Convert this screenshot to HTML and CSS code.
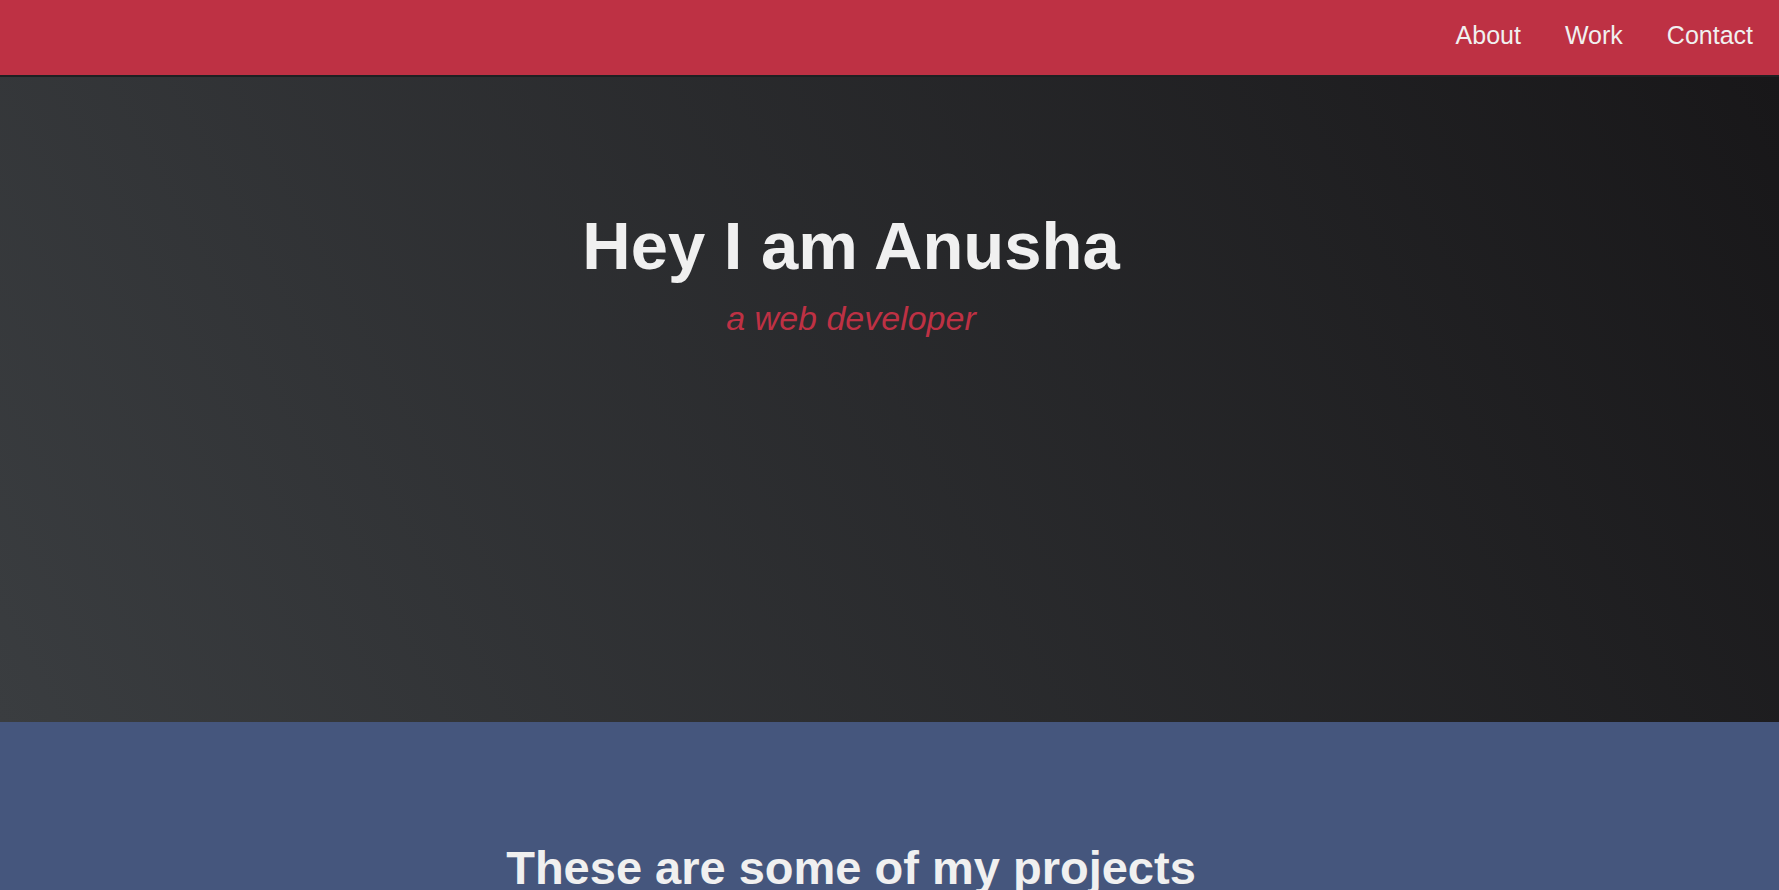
FILE: index.html
```html
<!DOCTYPE html>
<html lang="en">
<head>
<meta charset="utf-8">
<title>Anusha</title>
<link rel="stylesheet" href="styles.css">
</head>
<body>
<nav class="nav">
  <ul class="nav-list">
    <li><a class="nav-link" href="#welcome">About</a></li>
    <li><a class="nav-link" href="#projects">Work</a></li>
    <li><a class="nav-link" href="#contact">Contact</a></li>
  </ul>
</nav>
<section class="welcome" id="welcome">
  <h1 class="welcome-title">Hey I am Anusha</h1>
  <p class="welcome-sub">a web developer</p>
</section>
<section class="projects" id="projects">
  <h2 class="projects-title">These are some of my projects</h2>
</section>
</body>
</html>
```
FILE: styles.css
```css
html, body {
  margin: 0;
  padding: 0;
}
body {
  font-family: "Liberation Sans", Arial, sans-serif;
  color: #f0f0f0;
  background: #45567d;
}
.nav {
  box-sizing: border-box;
  height: 77px;
  background: #be3144;
  border-bottom: 2px solid #1f2022;
  padding: 21px 26px 0 0;
}
.nav-list {
  list-style: none;
  margin: 0;
  padding: 0;
  display: flex;
  justify-content: flex-end;
  gap: 44px;
}
.nav-link {
  display: block;
  color: #f0f0f0;
  text-decoration: none;
  font-size: 25px;
  line-height: 1.15;
}
.welcome {
  box-sizing: border-box;
  height: 645px;
  background: linear-gradient(62deg, #3a3d40 0%, #181719 100%);
  display: flex;
  flex-direction: column;
  align-items: center;
  padding: 129px 77px 0 0;
}
.welcome-title {
  margin: 0;
  font-size: 67px;
  line-height: 1.2;
  font-weight: bold;
  color: #f0f0f0;
}
.welcome-sub {
  margin: 12px 0 0;
  font-size: 34px;
  line-height: 1.2;
  font-style: italic;
  color: #be3144;
}
.projects {
  background: #45567d;
  padding: 118px 77px 40px 0;
  display: flex;
  flex-direction: column;
  align-items: center;
}
.projects-title {
  margin: 0;
  font-size: 47px;
  line-height: 1.2;
  font-weight: bold;
  color: #f0f0f0;
}
```
